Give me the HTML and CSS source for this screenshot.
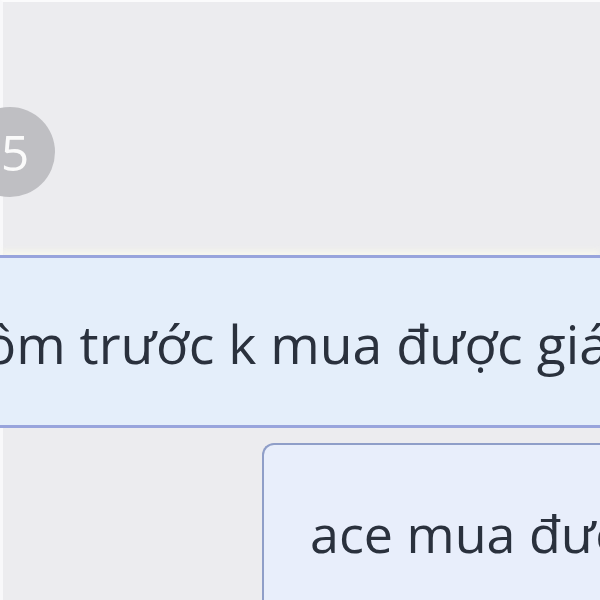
FILE: index.html
```html
<!DOCTYPE html>
<html lang="vi">
<head>
<meta charset="utf-8">
<link rel="stylesheet" href="styles.css">
</head>
<body>
<div class="frame">
  <div class="badge-row"><span class="badge">5</span></div>
  <div class="bubble bubble-full"><p class="msg msg-first">ôm trước k mua được giá</p></div>
  <div class="bubble bubble-reply"><p class="msg msg-reply">ace mua được giá</p></div>
</div>
</body>
</html>
```
FILE: styles.css
```css
html, body {
  margin: 0;
  padding: 0;
  width: 600px;
  height: 600px;
  overflow: hidden;
  background: #ececef;
}
.frame {
  height: 598px;
  border-top: 2px solid #fbfbfc;
  border-left: 3px solid #f8f8fa;
  display: flex;
  flex-direction: column;
  font-family: "Open Sans", "Noto Sans", sans-serif;
  color: #2a313d;
}
.badge-row {
  margin-top: 105px;
  height: 90px;
  display: flex;
}
.badge {
  margin-left: -38px;
  width: 80px;
  height: 90px;
  padding-left: 10px;
  border-radius: 45px;
  background: #bfbfc3;
  color: #fafafa;
  font-size: 50px;
  line-height: 90px;
  text-align: center;
}
.bubble {
  overflow: hidden;
  white-space: nowrap;
}
.bubble-full {
  margin-top: 58px;
  margin-left: -3px;
  border-top: 3px solid #98a4dc;
  border-bottom: 3px solid #98a4dc;
  background: #e4eefa;
  padding: 55px 0 51px 0;
  box-shadow: 0 -5px 6px rgba(250, 250, 236, 0.7);
}
.bubble-reply {
  margin-top: 15px;
  margin-left: 259px;
  margin-right: -20px;
  flex: 1;
  border-top: 2px solid #8f9ec8;
  border-left: 2px solid #8f9ec8;
  border-top-left-radius: 12px;
  background: #e8eefb;
  padding: 57px 0 0 46px;
}
.msg {
  margin: 0;
  font-size: 53.5px;
  line-height: 61px;
}
.msg-first {
  margin-left: -16px;
}
.msg-reply {
  font-size: 52px;
}
```
